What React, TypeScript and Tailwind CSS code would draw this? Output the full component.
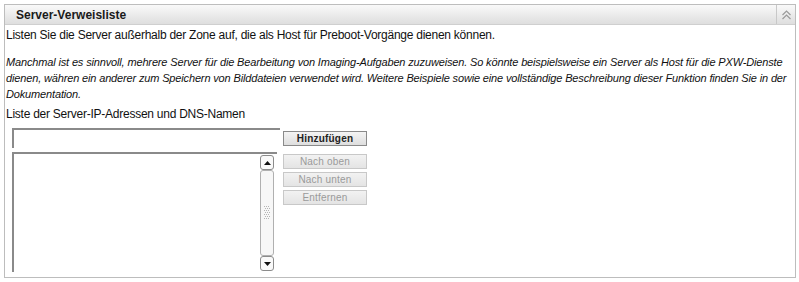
import React from 'react';

function CollapseIcon() {
  return (
    <svg width="11" height="10" viewBox="0 0 11 10" className="text-[#9a9a9a]">
      <path d="M1.5 5 L5.5 1 L9.5 5" fill="none" stroke="currentColor" strokeWidth="1.2" />
      <path d="M1.5 9 L5.5 5 L9.5 9" fill="none" stroke="currentColor" strokeWidth="1.2" />
    </svg>
  );
}

function ScrollBar() {
  return (
    <div className="absolute right-[3px] top-[1px] bottom-[1px] w-[14px] flex flex-col">
      <div className="h-[15px] border border-[#8c8c8c] rounded-[3px] bg-[#fafafa] flex items-center justify-center">
        <svg width="7" height="4" viewBox="0 0 7 4"><path d="M0 4 L3.5 0 L7 4 Z" fill="#111" /></svg>
      </div>
      <div className="flex-1 border border-[#b0b0b0] rounded-[3px] bg-[#f7f7f7] flex items-center justify-center">
        <svg width="6" height="14" viewBox="0 0 6 14">
          {[0, 2, 4, 6, 8, 10, 12].map(y => (
            <g key={y} fill="#b5b5b5">
              <rect x={y % 4 === 0 ? 0 : 1} y={y} width="1" height="1" />
              <rect x={y % 4 === 0 ? 2 : 3} y={y} width="1" height="1" />
              <rect x={y % 4 === 0 ? 4 : 5} y={y} width="1" height="1" />
            </g>
          ))}
        </svg>
      </div>
      <div className="h-[15px] border border-[#8c8c8c] rounded-[3px] bg-[#fafafa] flex items-center justify-center">
        <svg width="7" height="4" viewBox="0 0 7 4"><path d="M0 0 L7 0 L3.5 4 Z" fill="#111" /></svg>
      </div>
    </div>
  );
}

function Btn({ label, disabled }: { label: string; disabled?: boolean }) {
  return (
    <div
      className={
        'w-[84px] h-[15px] flex items-center justify-center leading-none border text-[10px] tracking-[0.2px] ' +
        (disabled
          ? 'border-[#c8c8c8] bg-[linear-gradient(#f2f2f2,#e4e4e4)] text-[#9a9a9a]'
          : 'border-[#8a8a8a] bg-[linear-gradient(#f4f4f4,#dedede)] text-[#222] font-bold')
      }
    >
      {label}
    </div>
  );
}

export default function App() {
  return (
    <div className="w-[799px] h-[282px] bg-white pt-[4px] pl-[4px] font-['Liberation_Sans',Arial,sans-serif] text-[#111]">
      <div className="w-[792px] h-[274px] border border-[#bdbdbd] flex flex-col">
        {/* Header */}
        <div className="h-[20px] flex items-stretch border-b border-[#cfcfcf] bg-[linear-gradient(#f9f9f9,#dedede)]">
          <div className="flex-1 pl-[11px] flex items-center text-[12px] font-bold text-[#1a1a1a]">Server-Verweisliste</div>
          <div className="w-[19px] border-l border-[#c8c8c8] flex items-center justify-center">
            <CollapseIcon />
          </div>
        </div>

        {/* Body */}
        <div className="pl-[1px] pt-[2px]">
          <p className="text-[12px] leading-[16px] tracking-[-0.25px]">
            Listen Sie die Server außerhalb der Zone auf, die als Host für Preboot-Vorgänge dienen können.
          </p>
          <p className="mt-[11px] text-[11px] leading-[16px] tracking-[-0.15px] italic whitespace-nowrap">
            Manchmal ist es sinnvoll, mehrere Server für die Bearbeitung von Imaging-Aufgaben zuzuweisen. So könnte beispielsweise ein Server als Host für die PXW-Dienste
            <br />
            dienen, währen ein anderer zum Speichern von Bilddateien verwendet wird. Weitere Beispiele sowie eine vollständige Beschreibung dieser Funktion finden Sie in der
            <br />
            Dokumentation.
          </p>
          <p className="mt-[4px] text-[12px] leading-[16px] tracking-[-0.25px]">Liste der Server-IP-Adressen und DNS-Namen</p>

          <div className="mt-[6px] ml-[6px] flex items-start">
            <div className="w-[268px] h-[20px] bg-white border-t-2 border-l-2 border-[#8a8a8a]" />
            <div className="ml-[3px] mt-[3px]">
              <Btn label="Hinzufügen" />
            </div>
          </div>

          <div className="mt-[4px] ml-[6px] flex items-start">
            <div className="relative w-[265px] h-[120px] bg-white border-t-2 border-l-2 border-[#8a8a8a]">
              <ScrollBar />
            </div>
            <div className="ml-[6px] mt-[2px] flex flex-col gap-[3px]">
              <Btn label="Nach oben" disabled />
              <Btn label="Nach unten" disabled />
              <Btn label="Entfernen" disabled />
            </div>
          </div>
        </div>
      </div>
    </div>
  );
}
